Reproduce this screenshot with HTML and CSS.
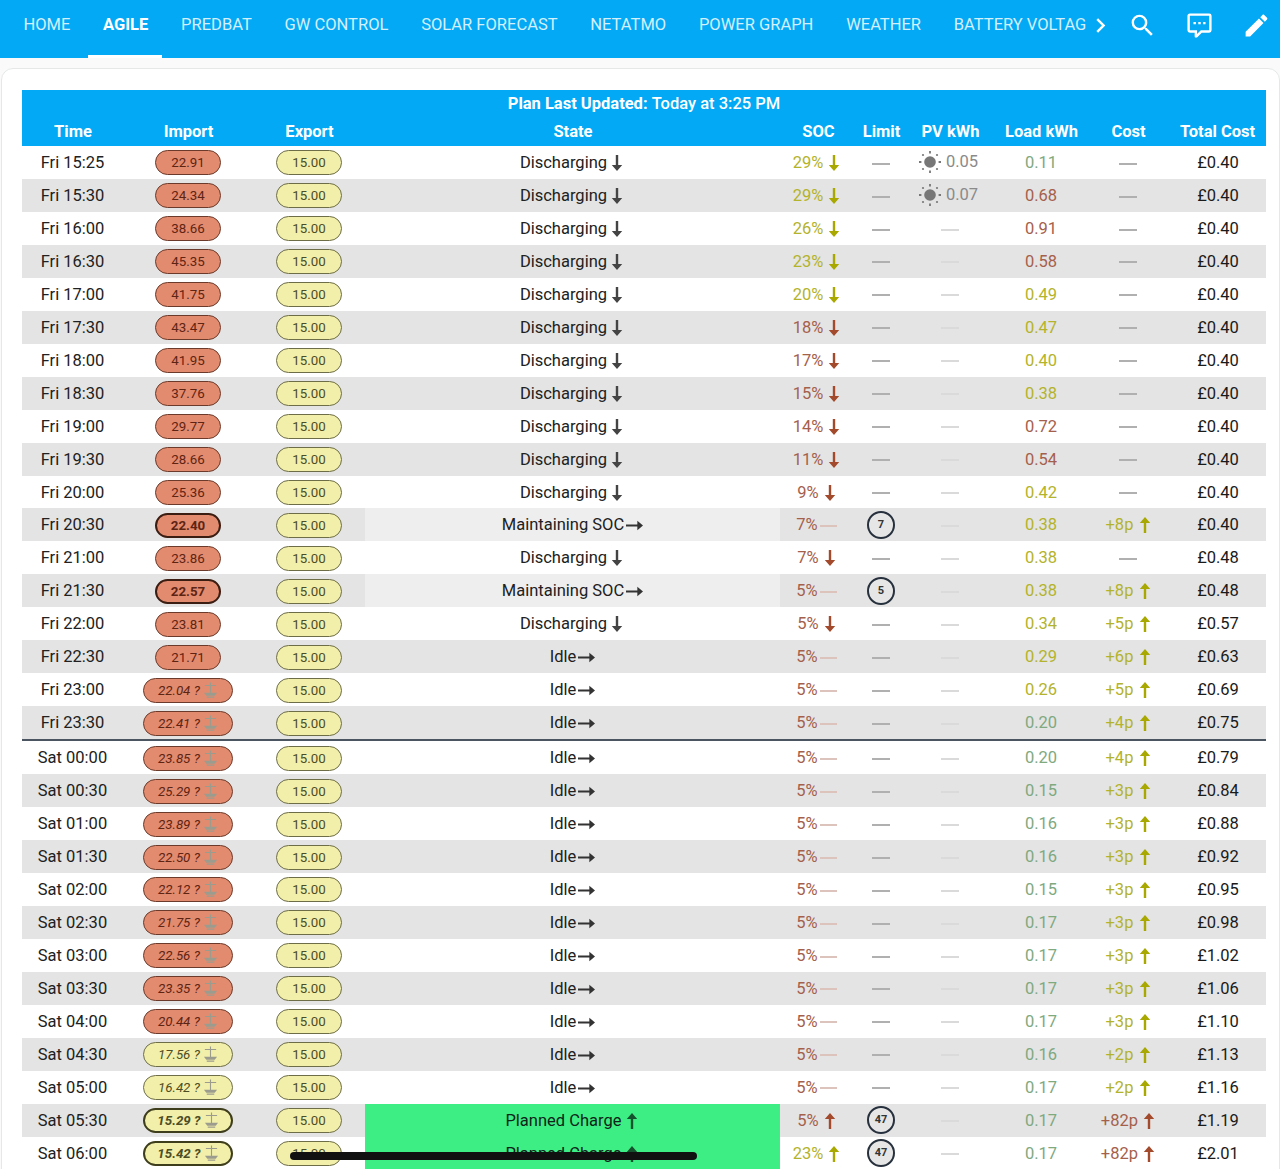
FILE: index.html
```html
<!DOCTYPE html>
<html lang="en">
<head>
    <meta charset="UTF-8">
    <title>Agile - Home Assistant</title>
    <link rel="stylesheet" href="styles.css">
</head>
<body>
    <svg class="defs" width="0" height="0">
        <symbol id="dn" viewBox="0 0 12 16"><path d="M4.800 0h2.400v10h4L6 16 .8 10h4z"/></symbol>
        <symbol id="up" viewBox="0 0 12 16"><path d="M4.800 16h2.400V6h4L6 0 .8 6h4z"/></symbol>
        <symbol id="rt" viewBox="0 0 18 11"><path d="M0 4.400h12V.4l6 5.100-6 5.100V6.600H0z"/></symbol>
        <symbol id="scale" viewBox="0 0 16 18"><path d="M2 3h12v1.200H8.600V13H7.400V4.200H2zM7.400 .5h1.200V3H7.400zM1 11.500h14l-2.500 3h-9zM4 15.500h8v1.200H4z"/></symbol>
        <symbol id="sun" viewBox="0 0 24 24">
            <circle cx="12" cy="12" r="5.800"/>
            <path d="M11.100 1h1.800v2.400h-1.800zM11.100 20.600h1.800V23h-1.800zM1 11.100h2.400v1.800H1zM20.600 11.100H23v1.800h-2.400z"/>
            <circle cx="5" cy="5" r="1.100"/><circle cx="19" cy="5" r="1.100"/><circle cx="5" cy="19" r="1.100"/><circle cx="19" cy="19" r="1.100"/>
        </symbol>
    </svg>

    <header class="app-bar">
        <nav class="tabs">
            <a>Home</a>
            <a class="active">Agile</a>
            <a>Predbat</a>
            <a>GW Control</a>
            <a>Solar Forecast</a>
            <a>Netatmo</a>
            <a>Power Graph</a>
            <a>Weather</a>
            <a>Battery Voltage</a>
        </nav>
        <svg class="icon chevron" viewBox="0 0 24 24"><path d="M8.59,16.58L13.17,12L8.59,7.41L10,6L16,12L10,18L8.59,16.58Z"/></svg>
        <svg class="icon search" viewBox="0 0 24 24"><path d="M9.5,3A6.5,6.5 0 0,1 16,9.5C16,11.11 15.41,12.59 14.44,13.73L14.71,14H15.5L20.5,19L19,20.5L14,15.5V14.71L13.73,14.44C12.59,15.41 11.11,16 9.5,16A6.5,6.5 0 0,1 3,9.5A6.5,6.5 0 0,1 9.5,3M9.5,5C7,5 5,7 5,9.5C5,12 7,14 9.5,14C12,14 14,12 14,9.5C14,7 12,5 9.5,5Z"/></svg>
        <svg class="icon chat" viewBox="0 0 24 24"><path d="M9,22A1,1 0 0,1 8,21V18H4A2,2 0 0,1 2,16V4C2,2.89 2.9,2 4,2H20A2,2 0 0,1 22,4V16A2,2 0 0,1 20,18H13.9L10.2,21.71C10,21.9 9.75,22 9.5,22V22H9M10,16V19.08L13.08,16H20V4H4V16H10M17,11V9H15V11H17M13,11V9H11V11H13M9,11V9H7V11H9Z"/></svg>
        <svg class="icon pencil" viewBox="0 0 24 24"><path d="M20.71,7.04C21.1,6.65 21.1,6 20.71,5.63L18.37,3.29C18,2.9 17.35,2.9 16.96,3.29L15.12,5.12L18.87,8.87M3,17.25V21H6.75L17.81,9.93L14.06,6.18L3,17.25Z"/></svg>
    </header>

    <main class="card">
        <table class="plan">
            <colgroup>
                <col class="c-time"><col class="c-import"><col class="c-export"><col class="c-state"><col class="c-soc"><col class="c-limit"><col class="c-pv"><col class="c-load"><col class="c-cost"><col class="c-total">
            </colgroup>
            <thead>
                <tr class="title-row"><th colspan="10">Plan Last Updated: <span>Today at 3:25 PM</span></th></tr>
                <tr class="head-row">
                    <th>Time</th><th>Import</th><th>Export</th><th>State</th><th>SOC</th><th>Limit</th><th>PV kWh</th><th>Load kWh</th><th>Cost</th><th>Total Cost</th>
                </tr>
            </thead>
            <tbody>
                <tr><td>Fri 15:25</td><td><b class="pill red">22.91</b></td><td><b class="pill yel">15.00</b></td><td>Discharging <svg class="ar"><use href="#dn"/></svg></td><td class="ol">29% <svg class="ar"><use href="#dn"/></svg></td><td><i class="dash"></i></td><td class="pv"><svg class="sun"><use href="#sun"/></svg> 0.05</td><td class="gr">0.11</td><td><i class="dash"></i></td><td class="tot">£0.40</td></tr>
                <tr><td>Fri 15:30</td><td><b class="pill red">24.34</b></td><td><b class="pill yel">15.00</b></td><td>Discharging <svg class="ar"><use href="#dn"/></svg></td><td class="ol">29% <svg class="ar"><use href="#dn"/></svg></td><td><i class="dash"></i></td><td class="pv"><svg class="sun"><use href="#sun"/></svg> 0.07</td><td class="rd">0.68</td><td><i class="dash"></i></td><td class="tot">£0.40</td></tr>
                <tr><td>Fri 16:00</td><td><b class="pill red">38.66</b></td><td><b class="pill yel">15.00</b></td><td>Discharging <svg class="ar"><use href="#dn"/></svg></td><td class="ol">26% <svg class="ar"><use href="#dn"/></svg></td><td><i class="dash"></i></td><td><i class="dash pale"></i></td><td class="rd">0.91</td><td><i class="dash"></i></td><td class="tot">£0.40</td></tr>
                <tr><td>Fri 16:30</td><td><b class="pill red">45.35</b></td><td><b class="pill yel">15.00</b></td><td>Discharging <svg class="ar"><use href="#dn"/></svg></td><td class="ol">23% <svg class="ar"><use href="#dn"/></svg></td><td><i class="dash"></i></td><td><i class="dash pale"></i></td><td class="rd">0.58</td><td><i class="dash"></i></td><td class="tot">£0.40</td></tr>
                <tr><td>Fri 17:00</td><td><b class="pill red">41.75</b></td><td><b class="pill yel">15.00</b></td><td>Discharging <svg class="ar"><use href="#dn"/></svg></td><td class="ol">20% <svg class="ar"><use href="#dn"/></svg></td><td><i class="dash"></i></td><td><i class="dash pale"></i></td><td class="ol">0.49</td><td><i class="dash"></i></td><td class="tot">£0.40</td></tr>
                <tr><td>Fri 17:30</td><td><b class="pill red">43.47</b></td><td><b class="pill yel">15.00</b></td><td>Discharging <svg class="ar"><use href="#dn"/></svg></td><td class="rd">18% <svg class="ar"><use href="#dn"/></svg></td><td><i class="dash"></i></td><td><i class="dash pale"></i></td><td class="ol">0.47</td><td><i class="dash"></i></td><td class="tot">£0.40</td></tr>
                <tr><td>Fri 18:00</td><td><b class="pill red">41.95</b></td><td><b class="pill yel">15.00</b></td><td>Discharging <svg class="ar"><use href="#dn"/></svg></td><td class="rd">17% <svg class="ar"><use href="#dn"/></svg></td><td><i class="dash"></i></td><td><i class="dash pale"></i></td><td class="ol">0.40</td><td><i class="dash"></i></td><td class="tot">£0.40</td></tr>
                <tr><td>Fri 18:30</td><td><b class="pill red">37.76</b></td><td><b class="pill yel">15.00</b></td><td>Discharging <svg class="ar"><use href="#dn"/></svg></td><td class="rd">15% <svg class="ar"><use href="#dn"/></svg></td><td><i class="dash"></i></td><td><i class="dash pale"></i></td><td class="ol">0.38</td><td><i class="dash"></i></td><td class="tot">£0.40</td></tr>
                <tr><td>Fri 19:00</td><td><b class="pill red">29.77</b></td><td><b class="pill yel">15.00</b></td><td>Discharging <svg class="ar"><use href="#dn"/></svg></td><td class="rd">14% <svg class="ar"><use href="#dn"/></svg></td><td><i class="dash"></i></td><td><i class="dash pale"></i></td><td class="rd">0.72</td><td><i class="dash"></i></td><td class="tot">£0.40</td></tr>
                <tr><td>Fri 19:30</td><td><b class="pill red">28.66</b></td><td><b class="pill yel">15.00</b></td><td>Discharging <svg class="ar"><use href="#dn"/></svg></td><td class="rd">11% <svg class="ar"><use href="#dn"/></svg></td><td><i class="dash"></i></td><td><i class="dash pale"></i></td><td class="rd">0.54</td><td><i class="dash"></i></td><td class="tot">£0.40</td></tr>
                <tr><td>Fri 20:00</td><td><b class="pill red">25.36</b></td><td><b class="pill yel">15.00</b></td><td>Discharging <svg class="ar"><use href="#dn"/></svg></td><td class="rd">9% <svg class="ar"><use href="#dn"/></svg></td><td><i class="dash"></i></td><td><i class="dash pale"></i></td><td class="ol">0.42</td><td><i class="dash"></i></td><td class="tot">£0.40</td></tr>
                <tr><td>Fri 20:30</td><td><b class="pill red strong">22.40</b></td><td><b class="pill yel">15.00</b></td><td class="hold">Maintaining SOC<svg class="rt"><use href="#rt"/></svg></td><td class="rd">7%<i class="flat"></i></td><td><b class="limit">7</b></td><td><i class="dash pale"></i></td><td class="ol">0.38</td><td class="ol">+8p <svg class="ar"><use href="#up"/></svg></td><td class="tot">£0.40</td></tr>
                <tr><td>Fri 21:00</td><td><b class="pill red">23.86</b></td><td><b class="pill yel">15.00</b></td><td>Discharging <svg class="ar"><use href="#dn"/></svg></td><td class="rd">7% <svg class="ar"><use href="#dn"/></svg></td><td><i class="dash"></i></td><td><i class="dash pale"></i></td><td class="ol">0.38</td><td><i class="dash"></i></td><td class="tot">£0.48</td></tr>
                <tr><td>Fri 21:30</td><td><b class="pill red strong">22.57</b></td><td><b class="pill yel">15.00</b></td><td class="hold">Maintaining SOC<svg class="rt"><use href="#rt"/></svg></td><td class="rd">5%<i class="flat"></i></td><td><b class="limit">5</b></td><td><i class="dash pale"></i></td><td class="ol">0.38</td><td class="ol">+8p <svg class="ar"><use href="#up"/></svg></td><td class="tot">£0.48</td></tr>
                <tr><td>Fri 22:00</td><td><b class="pill red">23.81</b></td><td><b class="pill yel">15.00</b></td><td>Discharging <svg class="ar"><use href="#dn"/></svg></td><td class="rd">5% <svg class="ar"><use href="#dn"/></svg></td><td><i class="dash"></i></td><td><i class="dash pale"></i></td><td class="ol">0.34</td><td class="ol">+5p <svg class="ar"><use href="#up"/></svg></td><td class="tot">£0.57</td></tr>
                <tr><td>Fri 22:30</td><td><b class="pill red">21.71</b></td><td><b class="pill yel">15.00</b></td><td>Idle<svg class="rt"><use href="#rt"/></svg></td><td class="rd">5%<i class="flat"></i></td><td><i class="dash"></i></td><td><i class="dash pale"></i></td><td class="ol">0.29</td><td class="ol">+6p <svg class="ar"><use href="#up"/></svg></td><td class="tot">£0.63</td></tr>
                <tr><td>Fri 23:00</td><td><b class="pill red guess">22.04 ? <svg class="scale"><use href="#scale"/></svg></b></td><td><b class="pill yel">15.00</b></td><td>Idle<svg class="rt"><use href="#rt"/></svg></td><td class="rd">5%<i class="flat"></i></td><td><i class="dash"></i></td><td><i class="dash pale"></i></td><td class="ol">0.26</td><td class="ol">+5p <svg class="ar"><use href="#up"/></svg></td><td class="tot">£0.69</td></tr>
                <tr><td>Fri 23:30</td><td><b class="pill red guess">22.41 ? <svg class="scale"><use href="#scale"/></svg></b></td><td><b class="pill yel">15.00</b></td><td>Idle<svg class="rt"><use href="#rt"/></svg></td><td class="rd">5%<i class="flat"></i></td><td><i class="dash"></i></td><td><i class="dash pale"></i></td><td class="gr">0.20</td><td class="ol">+4p <svg class="ar"><use href="#up"/></svg></td><td class="tot">£0.75</td></tr>
                <tr class="new-day"><td>Sat 00:00</td><td><b class="pill red guess">23.85 ? <svg class="scale"><use href="#scale"/></svg></b></td><td><b class="pill yel">15.00</b></td><td>Idle<svg class="rt"><use href="#rt"/></svg></td><td class="rd">5%<i class="flat"></i></td><td><i class="dash"></i></td><td><i class="dash pale"></i></td><td class="gr">0.20</td><td class="ol">+4p <svg class="ar"><use href="#up"/></svg></td><td class="tot">£0.79</td></tr>
                <tr><td>Sat 00:30</td><td><b class="pill red guess">25.29 ? <svg class="scale"><use href="#scale"/></svg></b></td><td><b class="pill yel">15.00</b></td><td>Idle<svg class="rt"><use href="#rt"/></svg></td><td class="rd">5%<i class="flat"></i></td><td><i class="dash"></i></td><td><i class="dash pale"></i></td><td class="gr">0.15</td><td class="ol">+3p <svg class="ar"><use href="#up"/></svg></td><td class="tot">£0.84</td></tr>
                <tr><td>Sat 01:00</td><td><b class="pill red guess">23.89 ? <svg class="scale"><use href="#scale"/></svg></b></td><td><b class="pill yel">15.00</b></td><td>Idle<svg class="rt"><use href="#rt"/></svg></td><td class="rd">5%<i class="flat"></i></td><td><i class="dash"></i></td><td><i class="dash pale"></i></td><td class="gr">0.16</td><td class="ol">+3p <svg class="ar"><use href="#up"/></svg></td><td class="tot">£0.88</td></tr>
                <tr><td>Sat 01:30</td><td><b class="pill red guess">22.50 ? <svg class="scale"><use href="#scale"/></svg></b></td><td><b class="pill yel">15.00</b></td><td>Idle<svg class="rt"><use href="#rt"/></svg></td><td class="rd">5%<i class="flat"></i></td><td><i class="dash"></i></td><td><i class="dash pale"></i></td><td class="gr">0.16</td><td class="ol">+3p <svg class="ar"><use href="#up"/></svg></td><td class="tot">£0.92</td></tr>
                <tr><td>Sat 02:00</td><td><b class="pill red guess">22.12 ? <svg class="scale"><use href="#scale"/></svg></b></td><td><b class="pill yel">15.00</b></td><td>Idle<svg class="rt"><use href="#rt"/></svg></td><td class="rd">5%<i class="flat"></i></td><td><i class="dash"></i></td><td><i class="dash pale"></i></td><td class="gr">0.15</td><td class="ol">+3p <svg class="ar"><use href="#up"/></svg></td><td class="tot">£0.95</td></tr>
                <tr><td>Sat 02:30</td><td><b class="pill red guess">21.75 ? <svg class="scale"><use href="#scale"/></svg></b></td><td><b class="pill yel">15.00</b></td><td>Idle<svg class="rt"><use href="#rt"/></svg></td><td class="rd">5%<i class="flat"></i></td><td><i class="dash"></i></td><td><i class="dash pale"></i></td><td class="gr">0.17</td><td class="ol">+3p <svg class="ar"><use href="#up"/></svg></td><td class="tot">£0.98</td></tr>
                <tr><td>Sat 03:00</td><td><b class="pill red guess">22.56 ? <svg class="scale"><use href="#scale"/></svg></b></td><td><b class="pill yel">15.00</b></td><td>Idle<svg class="rt"><use href="#rt"/></svg></td><td class="rd">5%<i class="flat"></i></td><td><i class="dash"></i></td><td><i class="dash pale"></i></td><td class="gr">0.17</td><td class="ol">+3p <svg class="ar"><use href="#up"/></svg></td><td class="tot">£1.02</td></tr>
                <tr><td>Sat 03:30</td><td><b class="pill red guess">23.35 ? <svg class="scale"><use href="#scale"/></svg></b></td><td><b class="pill yel">15.00</b></td><td>Idle<svg class="rt"><use href="#rt"/></svg></td><td class="rd">5%<i class="flat"></i></td><td><i class="dash"></i></td><td><i class="dash pale"></i></td><td class="gr">0.17</td><td class="ol">+3p <svg class="ar"><use href="#up"/></svg></td><td class="tot">£1.06</td></tr>
                <tr><td>Sat 04:00</td><td><b class="pill red guess">20.44 ? <svg class="scale"><use href="#scale"/></svg></b></td><td><b class="pill yel">15.00</b></td><td>Idle<svg class="rt"><use href="#rt"/></svg></td><td class="rd">5%<i class="flat"></i></td><td><i class="dash"></i></td><td><i class="dash pale"></i></td><td class="gr">0.17</td><td class="ol">+3p <svg class="ar"><use href="#up"/></svg></td><td class="tot">£1.10</td></tr>
                <tr><td>Sat 04:30</td><td><b class="pill yel guess">17.56 ? <svg class="scale"><use href="#scale"/></svg></b></td><td><b class="pill yel">15.00</b></td><td>Idle<svg class="rt"><use href="#rt"/></svg></td><td class="rd">5%<i class="flat"></i></td><td><i class="dash"></i></td><td><i class="dash pale"></i></td><td class="gr">0.16</td><td class="ol">+2p <svg class="ar"><use href="#up"/></svg></td><td class="tot">£1.13</td></tr>
                <tr><td>Sat 05:00</td><td><b class="pill yel guess">16.42 ? <svg class="scale"><use href="#scale"/></svg></b></td><td><b class="pill yel">15.00</b></td><td>Idle<svg class="rt"><use href="#rt"/></svg></td><td class="rd">5%<i class="flat"></i></td><td><i class="dash"></i></td><td><i class="dash pale"></i></td><td class="gr">0.17</td><td class="ol">+2p <svg class="ar"><use href="#up"/></svg></td><td class="tot">£1.16</td></tr>
                <tr><td>Sat 05:30</td><td><b class="pill yel guess strong">15.29 ? <svg class="scale"><use href="#scale"/></svg></b></td><td><b class="pill yel">15.00</b></td><td class="charge">Planned Charge <svg class="ar"><use href="#up"/></svg></td><td class="rd">5% <svg class="ar"><use href="#up"/></svg></td><td><b class="limit">47</b></td><td><i class="dash pale"></i></td><td class="gr">0.17</td><td class="rd">+82p <svg class="ar"><use href="#up"/></svg></td><td class="tot">£1.19</td></tr>
                <tr><td>Sat 06:00</td><td><b class="pill yel guess strong">15.42 ? <svg class="scale"><use href="#scale"/></svg></b></td><td><b class="pill yel">15.00</b></td><td class="charge">Planned Charge <svg class="ar"><use href="#up"/></svg></td><td class="ol">23% <svg class="ar"><use href="#up"/></svg></td><td><b class="limit">47</b></td><td><i class="dash pale"></i></td><td class="gr">0.17</td><td class="rd">+82p <svg class="ar"><use href="#up"/></svg></td><td class="tot">£2.01</td></tr>
            </tbody>
        </table>
    </main>

    <div class="home-indicator"></div>
</body>
</html>
```

FILE: styles.css
```css
* {
    margin: 0;
    padding: 0;
    box-sizing: border-box;
}

html, body {
    height: 1169px;
    overflow: hidden;
}

body {
    font-family: Roboto, "Liberation Sans", sans-serif;
    background-color: #fafafa;
    color: #212121;
    position: relative;
}

.defs {
    position: absolute;
}

/* top bar */
.app-bar {
    display: flex;
    align-items: flex-start;
    height: 58px;
    background-color: #03a9f4;
    color: white;
}

.tabs {
    display: flex;
    width: 1080px;
    margin-left: 7px;
    overflow: hidden;
    flex-shrink: 0;
}

.tabs a {
    flex-shrink: 0;
    height: 58px;
    padding: 0 16.4px;
    line-height: 50px;
    font-size: 16.500px;
    text-transform: uppercase;
    white-space: nowrap;
    color: #d4f0fd;
}

.tabs a.active {
    position: relative;
    font-weight: 700;
    color: white;
}

.tabs a.active::after {
    content: "";
    position: absolute;
    left: 1px;
    right: 3px;
    bottom: 0;
    height: 3px;
    background-color: white;
}

.icon {
    fill: white;
    flex-shrink: 0;
    width: 29px;
    height: 29px;
    margin-top: 11px;
}

.chevron { margin-left: -1px; }
.search { margin-left: 13px; }
.chat { margin-left: 28px; }
.pencil { margin-left: 28px; }

/* card */
.card {
    margin: 10px 0 0 1px;
    padding: 21px 13px 0 20px;
    background-color: white;
    border: 1px solid #e6e8e8;
    border-radius: 12px 12px 0 0;
}

.plan {
    width: 1244px;
    table-layout: fixed;
    border-collapse: separate;
    border-spacing: 0;
    font-size: 16.500px;
}

.c-time { width: 101px; }
.c-import { width: 130px; }
.c-export { width: 112px; }
.c-state { width: 415px; }
.c-soc { width: 76px; }
.c-limit { width: 50px; }
.c-pv { width: 88px; }
.c-load { width: 94px; }
.c-cost { width: 80px; }
.c-total { width: 98px; }

.plan thead {
    background-color: #03a9f4;
    color: white;
}

.plan th {
    font-size: 16.500px;
    font-weight: 700;
    text-align: center;
}

.title-row th {
    height: 27px;
    padding-bottom: 1px;
}

.title-row span {
    font-weight: 500;
}

.head-row th {
    height: 29px;
    padding-left: 1px;
}

.plan td {
    height: 32.960px;
    text-align: center;
    vertical-align: middle;
    white-space: nowrap;
}

.plan td:nth-child(4) svg.ar {
    margin-left: 0;
    margin-right: 2px;
}

.plan td:nth-child(5) {
    padding-right: 3px;
}

.plan tbody tr:nth-child(even) {
    background-color: #e4e4e4;
}

.new-day td {
    height: 35px;
    border-top: 2px solid #4a5561;
}

.plan svg {
    vertical-align: -3px;
    fill: currentColor;
}

svg.ar { width: 12px; height: 16px; margin-left: 1px; color: #444; }
svg.rt { width: 17px; height: 11px; margin-left: 2px; vertical-align: -1px; color: #333; }

/* price pills */
.pill {
    display: inline-block;
    width: 66px;
    height: 25px;
    line-height: 24px;
    margin-top: 1px;
    border-radius: 13px;
    font-size: 13.300px;
    font-weight: 400;
    text-align: center;
    border: 1.500px solid;
}

.pill.red {
    background-color: #e38b6f;
    border-color: #6b3a2a;
    color: #5e2413;
}

.pill.yel {
    background-color: #f2efaa;
    border-color: #6d6d48;
    color: #4d4d25;
}

.pill.guess {
    width: 90px;
    font-style: italic;
}

.pill.strong {
    font-weight: 700;
    border-width: 2.500px;
    line-height: 22px;
}

.pill.red.strong { border-color: #3b1d12; }
.pill.yel.strong { border-color: #3e3e1c; }

.plan svg.scale {
    width: 15px;
    height: 17px;
    vertical-align: -4px;
    color: #9c9c8e;
}

/* state cell variants */
.hold {
    background-color: #eeeeee;
}

.charge {
    background-color: #3dee85;
    color: #102418;
}

.plan td.charge svg.ar { color: #14522e; }

/* coloured values */
.ol { color: #b3b32c; }
.rd { color: #a5604c; }
.gr { color: #7fa97f; }
.pv { color: #8a8a8a; padding-right: 4px; }
.tot { color: #1a1a1a; padding-left: 2px; }

.ol svg.ar { color: #a8a800; }
.rd svg.ar { color: #a34a2c; }

.plan .pv svg.sun {
    width: 24px;
    height: 24px;
    vertical-align: -7px;
    color: #777;
}

.dash {
    display: inline-block;
    width: 18px;
    height: 2px;
    background-color: #b0b0b0;
    vertical-align: middle;
}

.dash.pale {
    background-color: #dadada;
}

.flat {
    display: inline-block;
    width: 17px;
    height: 2px;
    margin-left: 2px;
    background-color: #dcc4bc;
    vertical-align: middle;
}

/* limit badge */
.limit {
    display: inline-block;
    width: 28px;
    height: 28px;
    line-height: 24px;
    border: 2px solid #27303d;
    border-radius: 50%;
    background-color: #e6e6e6;
    font-size: 11px;
    font-weight: 700;
    color: #333;
    vertical-align: middle;
}

/* phone gesture bar lying over the page */
.home-indicator {
    position: absolute;
    left: 290px;
    top: 1152px;
    width: 407px;
    height: 8px;
    background-color: #111;
    border-radius: 4px;
}
```
